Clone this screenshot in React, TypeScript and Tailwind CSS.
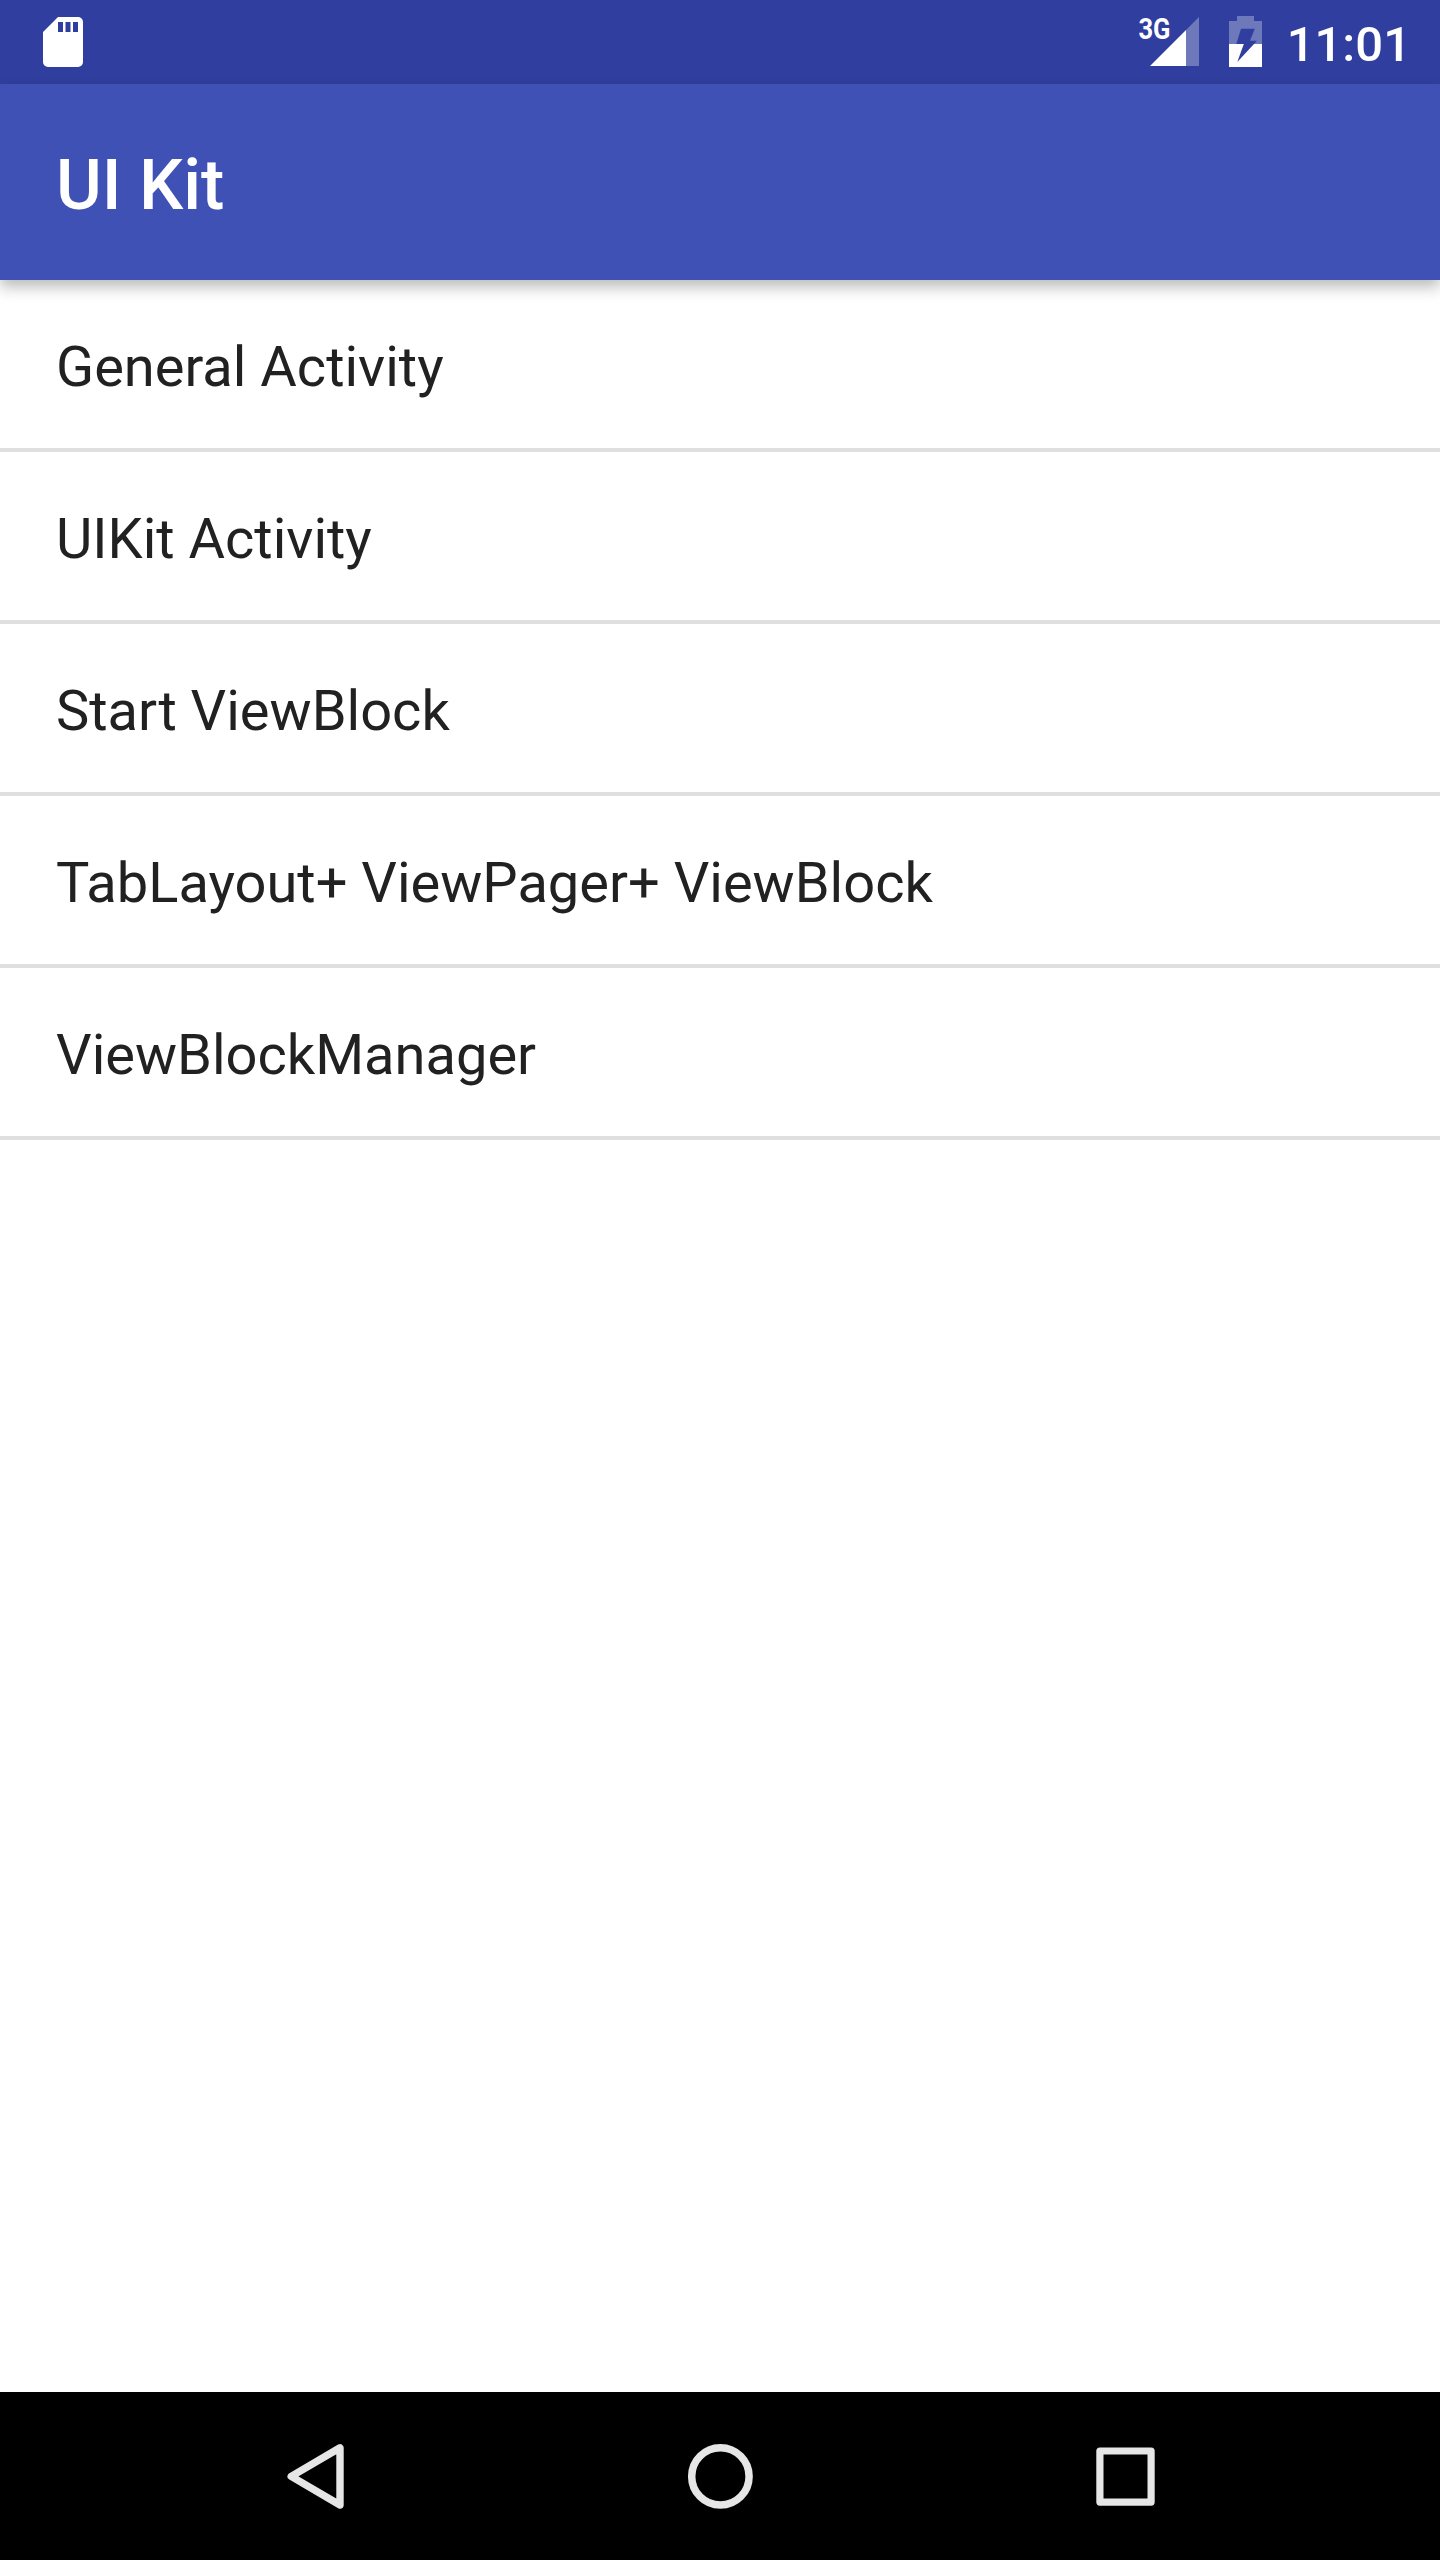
const items = [
  'General Activity',
  'UIKit Activity',
  'Start ViewBlock',
  'TabLayout+ ViewPager+ ViewBlock',
  'ViewBlockManager',
];

function SdCardIcon() {
  return (
    <svg width="40" height="50" viewBox="0 0 40 50" aria-hidden="true">
      <path
        fill="#fff"
        fillRule="evenodd"
        d="M15 0H35a5 5 0 0 1 5 5V45a5 5 0 0 1-5 5H5a5 5 0 0 1-5-5V15ZM15 5V15H20V5ZM22.5 5V15H27.5V5ZM30 5V15H35V5Z"
      />
    </svg>
  );
}

function SignalIcon() {
  return (
    <svg className="overflow-visible" width="61" height="50" viewBox="0 0 61 50" aria-hidden="true">
      <path fill="#fff" fillOpacity=".3" d="M60 0V49H47V13Z" />
      <path fill="#fff" d="M47 13V49H11Z" />
      <text x="-0.5" y="22" fontSize="29" fontWeight="700" textLength="32" lengthAdjust="spacingAndGlyphs" fill="#fff">
        3G
      </text>
    </svg>
  );
}

function BatteryIcon() {
  return (
    <svg width="33" height="51" viewBox="0 0 33 51" aria-hidden="true">
      <path fill="#fff" fillOpacity=".3" d="M8 0H25V5H33V28H0V5H8Z" />
      <path fill="#fff" d="M0 28H33V51H0Z" />
      <path fill="#303f9f" d="M12 12.7H25.8L21 24.7H28L8.3 46L14.8 28H7.3Z" />
    </svg>
  );
}

export default function App() {
  return (
    <div className="flex h-[2560px] w-[1440px] flex-col overflow-hidden bg-white font-['Roboto',sans-serif]">
      <div className="flex h-[84px] shrink-0 items-center bg-[#303f9f] pr-[29px] pl-[43px] text-white">
        <SdCardIcon />
        <div className="ml-auto flex items-center">
          <SignalIcon />
          <div className="mb-px ml-[29px]">
            <BatteryIcon />
          </div>
          <span className="ml-[25px] pt-[5px] text-[49px] leading-none font-medium">11:01</span>
        </div>
      </div>
      <header className="z-10 flex h-[196px] shrink-0 items-center bg-[#3f51b5] px-14 pt-1.5 shadow-[0_7px_14px_rgba(0,0,0,0.27)]">
        <h1 className="text-[70px] leading-none font-medium text-white">UI Kit</h1>
      </header>
      <ul className="flex-1">
        {items.map((item) => (
          <li
            key={item}
            className="flex h-[172px] items-center border-b-4 border-[#dfdfdf] px-14 pt-1.5 text-[56px] leading-none text-[#212121]"
          >
            {item}
          </li>
        ))}
      </ul>
      <nav className="flex h-[168px] shrink-0 items-center justify-between bg-black px-[283px]">
        <svg width="65" height="66" viewBox="0 0 65 66" fill="none" stroke="#e6e6e6" strokeWidth="7.4" strokeLinejoin="round" aria-label="Back">
          <path d="M57 4.8V62L8.2 33.4Z" />
        </svg>
        <svg width="66" height="66" viewBox="0 0 66 66" fill="none" stroke="#e6e6e6" strokeWidth="7.5" aria-label="Home">
          <circle cx="33.4" cy="33.4" r="28.7" />
        </svg>
        <svg width="65" height="66" viewBox="0 0 65 66" fill="none" stroke="#e6e6e6" strokeWidth="7.2" strokeLinejoin="round" aria-label="Overview">
          <path d="M7.9 8H59.1V59.1H7.9Z" />
        </svg>
      </nav>
    </div>
  );
}
